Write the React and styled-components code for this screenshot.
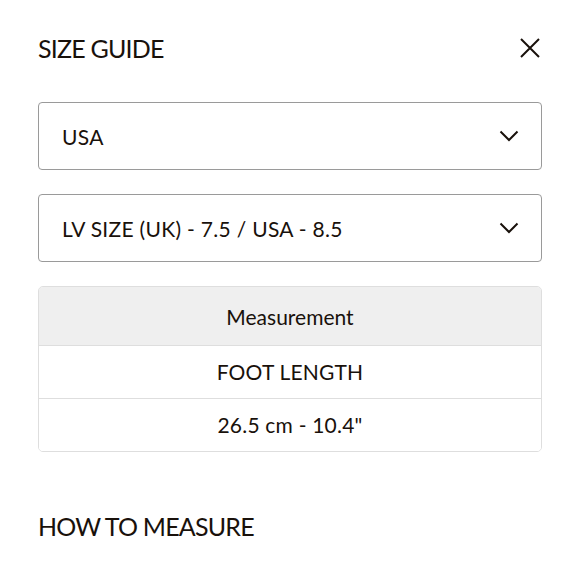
import React from 'react';
import styled, { createGlobalStyle } from 'styled-components';

const GlobalStyle = createGlobalStyle`
  html, body {
    margin: 0;
    padding: 0;
    background: #fff;
  }

  body {
    font-family: 'Lato', 'Liberation Sans', sans-serif;
    color: #19110b;
  }
`;

const Panel = styled.div`
  width: 580px;
  height: 580px;
  box-sizing: border-box;
  padding: 30px 38px 0 38px;
  overflow: hidden;
`;

const Header = styled.div`
  display: flex;
  align-items: center;
  justify-content: space-between;
  height: 36px;
`;

const Title = styled.h2`
  margin: 0;
  font-size: 25px;
  font-weight: 400;
  letter-spacing: -0.8px;
`;

const CloseButton = styled.button`
  border: 0;
  background: none;
  padding: 0;
  margin-right: 1px;
  width: 22px;
  height: 22px;
  display: flex;
  align-items: center;
  justify-content: center;
  cursor: pointer;
  color: #19110b;
`;

const Selects = styled.div`
  display: flex;
  flex-direction: column;
  gap: 24px;
  margin-top: 36px;
`;

const Select = styled.div`
  height: 68px;
  box-sizing: border-box;
  border: 1px solid #9a9a9a;
  border-radius: 4px;
  display: flex;
  align-items: center;
  justify-content: space-between;
  padding: 0 22px 0 23px;
  font-size: 21px;
  letter-spacing: 0.3px;
  cursor: pointer;
`;

const Table = styled.div`
  margin-top: 24px;
  border: 1px solid #dedede;
  border-radius: 5px;
  overflow: hidden;
`;

const Row = styled.div`
  height: ${p => p.$h}px;
  display: flex;
  align-items: center;
  justify-content: center;
  font-size: 21px;
  padding-bottom: ${p => (p.$head ? 0 : 2)}px;
  box-sizing: border-box;
  background: ${p => (p.$head ? '#efefef' : '#fff')};
  border-top: ${p => (p.$first ? 'none' : '1px solid #dedede')};
  letter-spacing: ${p => (p.$head ? '0' : '0.2px')};
`;

const Section = styled.h3`
  margin: 59px 0 0 0;
  font-size: 25px;
  font-weight: 400;
  letter-spacing: -0.8px;
`;

const Chevron = () => (
  <svg width="20" height="12" viewBox="0 0 20 12" fill="none">
    <path d="M1.5 1.5 L10 10 L18.5 1.5" stroke="#19110b" strokeWidth="2" />
  </svg>
);

const CloseIcon = () => (
  <svg width="20" height="20" viewBox="0 0 20 20" fill="none">
    <path d="M1 1 L19 19 M19 1 L1 19" stroke="#19110b" strokeWidth="2" />
  </svg>
);

export default function App() {
  return (
    <>
      <GlobalStyle />
      <Panel>
        <Header>
          <Title>SIZE GUIDE</Title>
          <CloseButton aria-label="Close">
            <CloseIcon />
          </CloseButton>
        </Header>

        <Selects>
          <Select>
            <span>USA</span>
            <Chevron />
          </Select>
          <Select>
            <span>LV SIZE (UK) - 7.5 / USA - 8.5</span>
            <Chevron />
          </Select>
        </Selects>

        <Table>
          <Row $head $first $h={58}>Measurement</Row>
          <Row $h={53}>FOOT LENGTH</Row>
          <Row $h={53}>26.5 cm - 10.4"</Row>
        </Table>

        <Section>HOW TO MEASURE</Section>
      </Panel>
    </>
  );
}
